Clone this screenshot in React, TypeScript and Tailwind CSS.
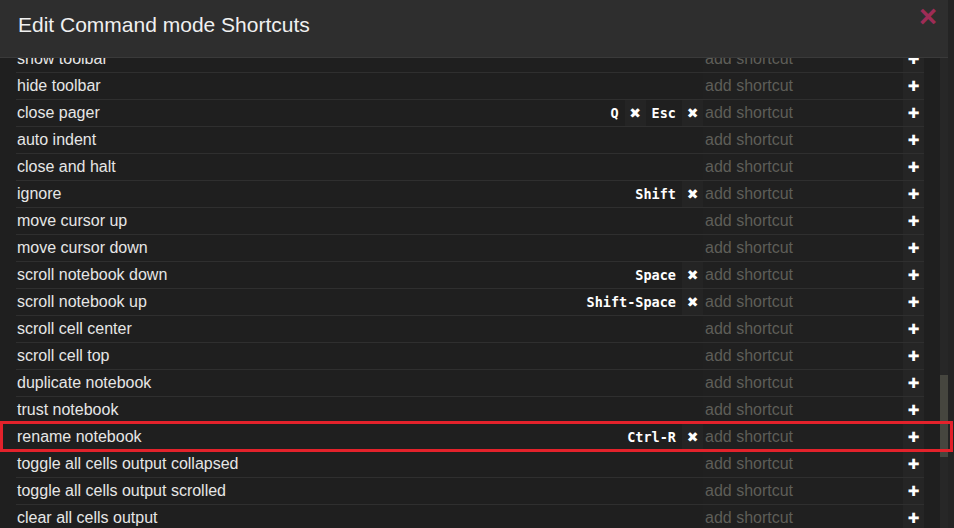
import { Fragment } from "react";

interface Row {
  name: string;
  keys: string[];
}

const rows: Row[] = [
  { name: "show toolbar", keys: [] },
  { name: "hide toolbar", keys: [] },
  { name: "close pager", keys: ["Q", "Esc"] },
  { name: "auto indent", keys: [] },
  { name: "close and halt", keys: [] },
  { name: "ignore", keys: ["Shift"] },
  { name: "move cursor up", keys: [] },
  { name: "move cursor down", keys: [] },
  { name: "scroll notebook down", keys: ["Space"] },
  { name: "scroll notebook up", keys: ["Shift-Space"] },
  { name: "scroll cell center", keys: [] },
  { name: "scroll cell top", keys: [] },
  { name: "duplicate notebook", keys: [] },
  { name: "trust notebook", keys: [] },
  { name: "rename notebook", keys: ["Ctrl-R"] },
  { name: "toggle all cells output collapsed", keys: [] },
  { name: "toggle all cells output scrolled", keys: [] },
  { name: "clear all cells output", keys: [] },
  { name: "restart kernel", keys: [] },
];

function ShortcutRow({ row }: { row: Row }) {
  return (
    <div className="flex items-center h-[27px] border-b border-[#2f2f2f] ml-[16px] w-[908px]">
      <span className="pl-[1px] text-[16px] text-[#e6e6e6] whitespace-nowrap">{row.name}</span>
      <div className="ml-auto flex items-center gap-[6px]">
        {row.keys.map((k) => (
          <Fragment key={k}>
            <span className="font-['DejaVu_Sans_Mono',monospace] font-bold text-[13.5px] text-white">
              {k}
            </span>
            <span className="w-[21px] h-[26px] flex items-center justify-center bg-[#242424] text-white text-[14px] font-['DejaVu_Sans',sans-serif]">
              ✖
            </span>
          </Fragment>
        ))}
      </div>
      <div className="w-[200px] h-[26px] flex items-center pl-[2px] text-[16px] text-[#5e5e58] bg-[#202020] whitespace-nowrap">
        add shortcut
      </div>
      <span className="w-[21px] h-[26px] flex items-center justify-center bg-[#252525] text-white text-[14px] font-['DejaVu_Sans',sans-serif]">
        ✚
      </span>
    </div>
  );
}

export default function App() {
  return (
    <div className="w-[954px] h-[528px] overflow-hidden flex bg-[#222222] font-['Liberation_Sans',Arial,sans-serif] relative">
      <div className="w-[948px] h-full flex flex-col bg-[#1f1f1f]">
        <div className="h-[58px] shrink-0 bg-[#2e2e2e] border-b border-[#3a3a3a] relative z-10 flex items-start pl-[18px] pt-[11px]">
          <h4 className="text-[21px] leading-[28px] text-[#f0f0f0]">Edit Command mode Shortcuts</h4>
          <span className="absolute right-[11px] top-[1px] text-[31px] font-bold leading-[32px] text-[#9e2c56]">
            ×
          </span>
        </div>
        <div className="flex-1 flex overflow-hidden">
          <div className="flex-1 overflow-hidden">
            <div className="-mt-[12px]">
              {rows.map((r) => (
                <ShortcutRow key={r.name} row={r} />
              ))}
            </div>
          </div>
          <div className="w-[8px] bg-[#272727] relative">
            <div className="absolute left-0 right-0 top-[317px] h-[82px] bg-[#46463f]" />
          </div>
        </div>
      </div>
      <div className="w-[6px] h-full bg-[#242424]" />
      <div className="absolute left-0 top-[421px] w-[953px] h-[31px] border-[3px] border-[#e3222b]" />
    </div>
  );
}
